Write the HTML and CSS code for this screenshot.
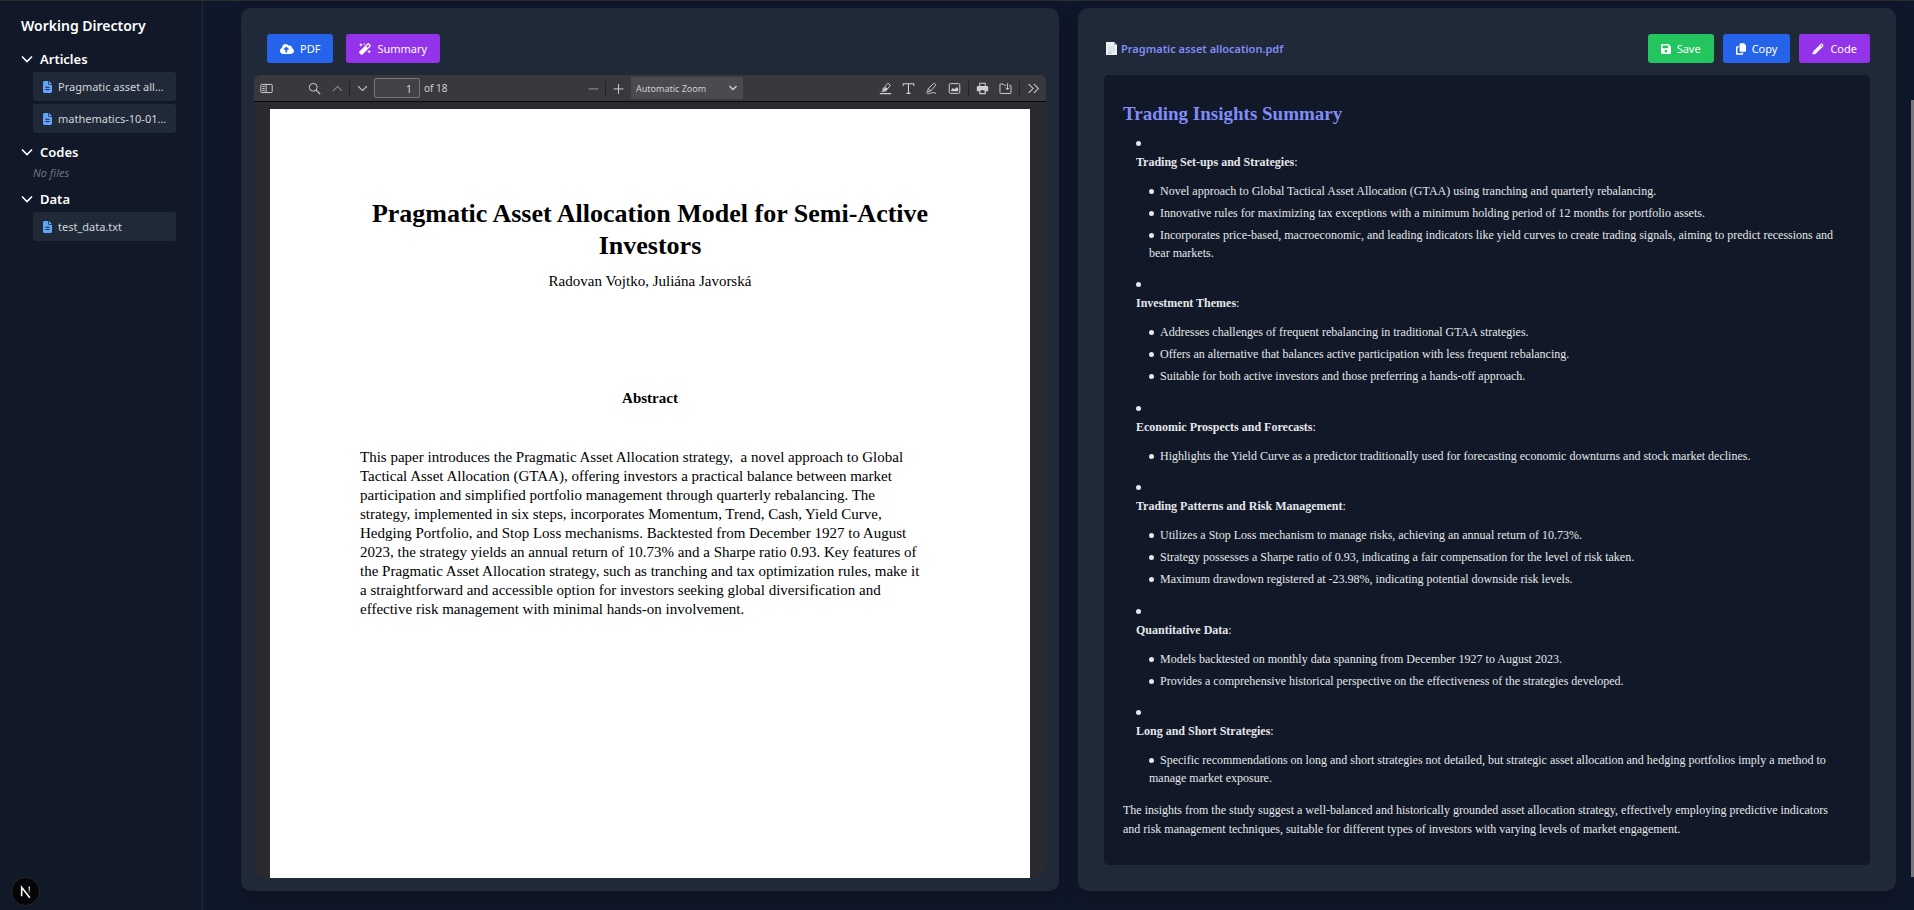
FILE: index.html
```html
<!DOCTYPE html>
<html lang="en">
<head>
<meta charset="utf-8">
<title>Trading Insights</title>
<link rel="stylesheet" href="styles.css">
</head>
<body>
<svg class="defs" aria-hidden="true">
  <symbol id="chev" viewBox="0 0 12 8"><path d="M1 1.5l5 5 5-5" fill="none" stroke="currentColor" stroke-width="1.6"/></symbol>
  <symbol id="file" viewBox="0 0 384 512"><path fill="currentColor" fill-rule="evenodd" d="M64 0C28.700 0 0 28.700 0 64v384c0 35.300 28.700 64 64 64h256c35.300 0 64-28.700 64-64V160H256c-17.700 0-32-14.300-32-32V0H64zm192 0v128h128L256 0zM112 240h160c8.800 0 16 7.200 16 24s-7.200 24-16 24H112c-8.800 0-16-7.200-16-24s7.200-24 16-24zm0 100h160c8.800 0 16 7.200 16 24s-7.200 24-16 24H112c-8.800 0-16-7.200-16-24s7.200-24 16-24z"/></symbol>
</svg>
<div class="app">
  <aside class="sidebar">
    <h1 class="sidebar-title">Working Directory</h1>
    <section class="folder">
      <button class="folder-head"><svg class="chevron"><use href="#chev"/></svg>Articles</button>
      <button class="file"><svg class="file-icon"><use href="#file"/></svg>Pragmatic asset all…</button>
      <button class="file"><svg class="file-icon"><use href="#file"/></svg>mathematics-10-01…</button>
    </section>
    <section class="folder">
      <button class="folder-head"><svg class="chevron"><use href="#chev"/></svg>Codes</button>
      <p class="empty">No files</p>
    </section>
    <section class="folder">
      <button class="folder-head"><svg class="chevron"><use href="#chev"/></svg>Data</button>
      <button class="file"><svg class="file-icon"><use href="#file"/></svg>test_data.txt</button>
    </section>
  </aside>

  <main class="main">
    <section class="panel">
      <div class="actions actions-left">
        <button class="btn blue"><svg class="ico wide" viewBox="0 0 640 512"><path fill="currentColor" d="M537.600 226.600c4.100-10.700 6.400-22.400 6.400-34.600 0-53-43-96-96-96-19.700 0-38.100 6-53.300 16.200C367 64.200 315.300 32 256 32c-88.400 0-160 71.600-160 160 0 2.700.1 5.400.2 8.100C40.200 219.800 0 273.200 0 336c0 79.500 64.500 144 144 144h368c70.700 0 128-57.300 128-128 0-61.900-44-113.600-102.400-125.400zM393.400 288H328v112c0 8.800-7.200 16-16 16h-48c-8.800 0-16-7.200-16-16V288h-65.400c-14.300 0-21.400-17.200-11.300-27.400l105.400-105.400c6.200-6.200 16.400-6.200 22.600 0l105.400 105.400c10.100 10.200 2.900 27.400-11.300 27.400z"/></svg>PDF</button>
        <button class="btn purple"><svg class="ico" viewBox="0 0 512 512"><path fill="currentColor" d="M224 96l16-32 32-16-32-16-16-32-16 32-32 16 32 16 16 32zM80 160l26.660-53.330L160 80l-53.340-26.670L80 0 53.340 53.330 0 80l53.340 26.670L80 160zm352 128l-26.660 53.330L352 368l53.340 26.670L432 448l26.660-53.330L512 368l-53.340-26.670L432 288zm70.620-193.770L417.770 9.380C411.530 3.120 403.340 0 395.150 0c-8.190 0-16.380 3.120-22.630 9.380L9.380 372.520c-12.500 12.500-12.500 32.760 0 45.250l84.850 84.850c6.250 6.250 14.440 9.370 22.620 9.370 8.190 0 16.380-3.120 22.630-9.370l363.140-363.150c12.500-12.480 12.500-32.750 0-45.240zM359.450 203.460l-50.910-50.910 86.600-86.600 50.910 50.910-86.600 86.600z"/></svg>Summary</button>
      </div>
      <div class="viewer">
        <div class="toolbar">
          <div class="tools">
            <button class="tool" aria-label="Toggle sidebar"><svg viewBox="0 0 16 16"><path d="M2 3h12a1 1 0 0 1 1 1v8a1 1 0 0 1-1 1H2a1 1 0 0 1-1-1V4a1 1 0 0 1 1-1zM7.500 3v10M2.800 5.500h3M2.800 8h3M2.800 10.500h3" fill="none" stroke="currentColor" stroke-width="1.200"/></svg></button>
            <button class="tool find" aria-label="Find"><svg viewBox="0 0 16 16"><circle cx="6.500" cy="6.500" r="4.800" fill="none" stroke="currentColor" stroke-width="1.200"/><path d="M10 10l5 5" stroke="currentColor" stroke-width="1.400"/></svg></button>
            <button class="tool dim" aria-label="Previous page"><svg viewBox="0 0 16 16"><path d="M2.500 11L8 5.500 13.500 11" fill="none" stroke="currentColor" stroke-width="1.300"/></svg></button>
            <span class="sep"></span>
            <button class="tool" aria-label="Next page"><svg viewBox="0 0 16 16"><path d="M2.500 5L8 10.500 13.500 5" fill="none" stroke="currentColor" stroke-width="1.300"/></svg></button>
            <input class="page-input" id="page" type="text" value="1" size="3"><label class="page-count" for="page">of 18</label>
          </div>
          <div class="tools tools-mid">
            <button class="tool dim" aria-label="Zoom out"><svg viewBox="0 0 16 16"><path d="M2 8.500h12" stroke="currentColor" stroke-width="1.400"/></svg></button>
            <span class="sep"></span>
            <button class="tool" aria-label="Zoom in"><svg viewBox="0 0 16 16"><path d="M2 8.500h12M8 2.500v12" stroke="currentColor" stroke-width="1.200"/></svg></button>
            <span class="zoom"><select class="zoom-select" aria-label="Zoom"><option>Automatic Zoom</option></select><svg class="zoom-arrow" viewBox="0 0 12 8"><path d="M2.500 2L6 5.500 9.500 2" fill="none" stroke="currentColor" stroke-width="1.400"/></svg></span>
          </div>
          <div class="tools tools-end">
            <button class="tool" aria-label="Highlight"><svg viewBox="0 0 16 16"><path d="M11 1.500l3 2.500-5.500 7H5L4.800 8.500z M4.800 8.500l3.500 2.500M3 11.500h3" fill="none" stroke="currentColor" stroke-width="1.200"/><path d="M8 6l2.500 2L8.500 10.500H5.500V9z" fill="currentColor"/><path d="M1 14.300h14" stroke="currentColor" stroke-width="1.500"/></svg></button>
            <button class="tool" aria-label="Text"><svg viewBox="0 0 16 16"><path d="M1.500 5V2.200h13V5M8 2.500v11.500M5.500 14h5" fill="none" stroke="currentColor" stroke-width="1.300"/></svg></button>
            <button class="tool" aria-label="Draw"><svg viewBox="0 0 16 16"><path d="M3 12l1-4 6.500-6c1.200-.8 3.300 1 2.500 2.300L7 11zM4.500 8l2.500 2.800M1.500 12.500c1 3 4 1.500 6 1s4-1 6 .7" fill="none" stroke="currentColor" stroke-width="1.200"/></svg></button>
            <button class="tool" aria-label="Add image"><svg viewBox="0 0 16 16"><rect x="1.500" y="2" width="13" height="12" rx="1.500" fill="none" stroke="currentColor" stroke-width="1.200"/><path d="M4 11.500V9.500l2-2 2 1.500 3-3 1.500 2v3.500z" fill="currentColor"/></svg></button>
            <span class="sep"></span>
            <button class="tool" aria-label="Print"><svg viewBox="0 0 16 16"><path fill="currentColor" fill-rule="evenodd" d="M4 1h8v4h1.500A1.500 1.500 0 0 1 15 6.500v5h-3V15H4v-3.500H1v-5A1.500 1.500 0 0 1 2.500 5H4zm1.200 1.200V5h5.600V2.200zM5.500 10v3.500h5V10z"/></svg></button>
            <button class="tool" aria-label="Save file"><svg viewBox="0 0 16 16"><path d="M8.500 4H6.500L5 2.500H2a.8.8 0 0 0-.8.8v10c0 .4.3.8.8.8h12c.5 0 .8-.4.800-.8V4.800c0-.5-.3-.8-.8-.8h-1.500M10.500 1.500v7.500M8 7l2.500 2.500L13 7" fill="none" stroke="currentColor" stroke-width="1.200"/></svg></button>
            <span class="sep"></span>
            <button class="tool" aria-label="More tools"><svg viewBox="0 0 16 16"><path d="M2 2.500L7.500 8 2 13.500M8.500 2.500L14 8l-5.500 5.500" fill="none" stroke="currentColor" stroke-width="1.300"/></svg></button>
          </div>
        </div>
        <div class="pages">
          <article class="paper">
            <h2 class="paper-title">Pragmatic Asset Allocation Model for Semi-Active<br>Investors</h2>
            <p class="paper-authors">Radovan Vojtko, Juliána Javorská</p>
            <h3 class="paper-section">Abstract</h3>
            <p class="paper-body">This paper introduces the Pragmatic Asset Allocation strategy, &nbsp;a novel approach to Global<br>Tactical Asset Allocation (GTAA), offering investors a practical balance between market<br>participation and simplified portfolio management through quarterly rebalancing. The<br>strategy, implemented in six steps, incorporates Momentum, Trend, Cash, Yield Curve,<br>Hedging Portfolio, and Stop Loss mechanisms. Backtested from December 1927 to August<br>2023, the strategy yields an annual return of 10.73% and a Sharpe ratio 0.93. Key features of<br>the Pragmatic Asset Allocation strategy, such as tranching and tax optimization rules, make it<br>a straightforward and accessible option for investors seeking global diversification and<br>effective risk management with minimal hands-on involvement.</p>
          </article>
        </div>
      </div>
    </section>

    <section class="panel panel-summary">
      <div class="actions">
        <h2 class="doc-name"><svg class="doc-icon" viewBox="0 0 11 13"><path d="M0 0h8l3 3v10H0z" fill="#eceff1"/><path d="M8 0v3h3z" fill="#7fb4d6"/><path d="M2 5h7M2 7h7M2 9h7" stroke="#cfd8dc" stroke-width="1"/><path d="M2 11h4" stroke="#b0bec5" stroke-width="1"/></svg>Pragmatic asset allocation.pdf</h2>
        <div class="btns">
          <button class="btn green"><svg class="ico narrow" viewBox="0 0 448 512"><path fill="currentColor" fill-rule="evenodd" d="M64 32C28.700 32 0 60.700 0 96v320c0 35.300 28.700 64 64 64h320c35.300 0 64-28.700 64-64V173.300c0-17-6.700-33.300-18.700-45.300L352 50.700C340 38.700 323.700 32 306.700 32H64zm0 96c0-17.700 14.300-32 32-32h192c17.700 0 32 14.300 32 32v64c0 17.700-14.300 32-32 32H96c-17.700 0-32-14.300-32-32v-64zM224 288a64 64 0 1 1 0 128 64 64 0 1 1 0-128z"/></svg>Save</button>
          <button class="btn blue"><svg class="ico narrow" viewBox="0 0 448 512"><path fill="currentColor" d="M208 0h124.100c12.700 0 24.900 5.100 33.900 14.100l67.900 67.900c9 9 14.100 21.200 14.100 33.900V336c0 26.500-21.500 48-48 48H208c-26.500 0-48-21.500-48-48V48c0-26.500 21.500-48 48-48zM48 128h80v64H64v256h192v-32h64v48c0 26.500-21.500 48-48 48H48c-26.500 0-48-21.500-48-48V176c0-26.500 21.500-48 48-48z"/></svg>Copy</button>
          <button class="btn purple"><svg class="ico" viewBox="0 0 12 12"><path fill="currentColor" fill-rule="evenodd" d="M.5 11.500l.6-3L8.600 1c1.300-1.300 3.700 1 2.400 2.400L3.500 10.900zM8.300 2.900l.8.800 1.200-1.200-.8-.8z"/></svg>Code</button>
        </div>
      </div>
      <article class="summary">
        <h2 class="summary-title">Trading Insights Summary</h2>
        <ul class="topics">
          <li><p><strong>Trading Set-ups and Strategies</strong>:</p>
            <ul class="points">
              <li>Novel approach to Global Tactical Asset Allocation (GTAA) using tranching and quarterly rebalancing.</li>
              <li>Innovative rules for maximizing tax exceptions with a minimum holding period of 12 months for portfolio assets.</li>
              <li>Incorporates price-based, macroeconomic, and leading indicators like yield curves to create trading signals, aiming to predict recessions and bear markets.</li>
            </ul></li>
          <li><p><strong>Investment Themes</strong>:</p>
            <ul class="points">
              <li>Addresses challenges of frequent rebalancing in traditional GTAA strategies.</li>
              <li>Offers an alternative that balances active participation with less frequent rebalancing.</li>
              <li>Suitable for both active investors and those preferring a hands-off approach.</li>
            </ul></li>
          <li><p><strong>Economic Prospects and Forecasts</strong>:</p>
            <ul class="points">
              <li>Highlights the Yield Curve as a predictor traditionally used for forecasting economic downturns and stock market declines.</li>
            </ul></li>
          <li><p><strong>Trading Patterns and Risk Management</strong>:</p>
            <ul class="points">
              <li>Utilizes a Stop Loss mechanism to manage risks, achieving an annual return of 10.73%.</li>
              <li>Strategy possesses a Sharpe ratio of 0.93, indicating a fair compensation for the level of risk taken.</li>
              <li>Maximum drawdown registered at -23.98%, indicating potential downside risk levels.</li>
            </ul></li>
          <li><p><strong>Quantitative Data</strong>:</p>
            <ul class="points">
              <li>Models backtested on monthly data spanning from December 1927 to August 2023.</li>
              <li>Provides a comprehensive historical perspective on the effectiveness of the strategies developed.</li>
            </ul></li>
          <li><p><strong>Long and Short Strategies</strong>:</p>
            <ul class="points">
              <li>Specific recommendations on long and short strategies not detailed, but strategic asset allocation and hedging portfolios imply a method to manage market exposure.</li>
            </ul></li>
        </ul>
        <p class="closing">The insights from the study suggest a well-balanced and historically grounded asset allocation strategy, effectively employing predictive indicators and risk management techniques, suitable for different types of investors with varying levels of market engagement.</p>
      </article>
    </section>
  </main>
</div>
<button class="dev-badge" aria-label="Developer tools"><svg viewBox="0 0 28 28"><defs><linearGradient id="fade" x1="0" y1="0" x2="0" y2="1"><stop offset="0" stop-color="#fff"/><stop offset="1" stop-color="#fff" stop-opacity="0"/></linearGradient></defs><path d="M10 19V9.500l8.500 11" fill="none" stroke="#fff" stroke-width="1.600"/><path d="M17.200 9h1.500v8h-1.500z" fill="url(#fade)"/></svg></button>
<div class="scroll-thumb"></div>
</body>
</html>
```
FILE: styles.css
```css
* { box-sizing: border-box; }
body {
  margin: 0;
  background: #0f172a;
  color: #fff;
  font-family: "Noto Sans", "Open Sans", sans-serif;
  font-size: 12px;
}
h1, h2, h3, p, ul { margin: 0; padding: 0; }
button, input, select { font: inherit; color: inherit; margin: 0; border: 0; background: none; }
button { padding: 0; cursor: pointer; }
svg { display: block; flex: none; }
.defs { position: absolute; width: 0; height: 0; }

.app {
  display: flex;
  min-height: 100vh;
  border-top: 1px solid #2b2a2c;
}

/* Sidebar */
.sidebar {
  width: 203px;
  flex: none;
  padding: 14px 26px 0 20px;
  background: #111827;
  border-right: 1px solid #1f2937;
}
.sidebar-title {
  padding-left: 1px;
  font-size: 14px;
  line-height: 22px;
  font-weight: 600;
  white-space: nowrap;
}
.folder { display: flex; flex-direction: column; gap: 3px; padding-left: 13px; }
.sidebar-title + .folder { margin-top: 12px; }
.folder + .folder { margin-top: 9px; }
.folder-head {
  display: flex;
  align-items: center;
  gap: 7px;
  height: 20px;
  margin-left: -12px;
  font-size: 13px;
  font-weight: 600;
}
.chevron { width: 12px; height: 8px; }
.file {
  display: flex;
  align-items: center;
  gap: 6px;
  height: 29px;
  padding: 0 10px;
  border-radius: 3px;
  background: #1f2937;
  color: #d1d5db;
  font-size: 11px;
  white-space: nowrap;
}
.file-icon { width: 9px; height: 12px; color: #60a5fa; }
.empty { color: #6b7280; font-size: 11px; line-height: 15px; font-style: italic; }

/* Panels */
.main {
  flex: 1;
  min-width: 0;
  display: grid;
  grid-template-columns: 1fr 1fr;
  gap: 19px;
  padding: 7px 18px 19px 38px;
}
.panel {
  display: flex;
  flex-direction: column;
  min-width: 0;
  padding: 26px 13px 13px;
  border-radius: 10px;
  background: #1f2937;
  box-shadow: 0 8px 14px rgba(15, 15, 25, 0.5);
}
.panel-summary { padding: 26px; }
.actions {
  display: flex;
  align-items: center;
  justify-content: space-between;
  margin-bottom: 12px;
}
.actions-left { justify-content: flex-start; gap: 13px; padding: 0 13px; }
.btns { display: flex; gap: 9px; }
.btn {
  display: flex;
  align-items: center;
  gap: 6px;
  height: 29px;
  padding: 0 13px;
  border-radius: 3px;
  font-size: 11px;
}
.blue { background: #2563eb; }
.purple { background: #9333ea; }
.green { background: #22c55e; }
.ico { width: 12px; height: 12px; }
.wide { width: 14px; }
.narrow { width: 10px; }
.doc-name {
  display: flex;
  align-items: center;
  gap: 4px;
  padding-left: 2px;
  color: #818cf8;
  font-size: 11px;
  font-weight: 600;
}
.doc-icon { width: 11px; height: 13px; }

/* PDF viewer */
.viewer {
  flex: 1;
  display: flex;
  flex-direction: column;
  border-radius: 6px 6px 10px 10px;
  background: #2a2a2e;
}
.toolbar {
  display: grid;
  grid-template-columns: 1fr auto 1fr;
  align-items: center;
  height: 27px;
  padding-left: 1px;
  border-radius: 6px 6px 0 0;
  border-bottom: 1px solid #0c0c0d;
  background: #38383d;
  color: #d0d0d2;
}
.tools { display: flex; align-items: center; }
.tools-mid { padding-left: 24px; }
.tools-end { justify-content: flex-end; padding-right: 1px; }
.tool { display: grid; place-items: center; width: 23px; height: 22px; padding: 0; }
.tool svg { width: 13px; height: 13px; }
.find { margin-left: 25px; }
.dim { color: #8c8c90; }
.sep { width: 1px; height: 15px; margin-right: 1px; background: #232327; }
.tools-end .sep { margin: 0 2px; }
.page-input {
  width: 46px;
  height: 20px;
  padding: 0 7px;
  border: 1px solid #77777a;
  border-radius: 2px;
  background: #414146;
  font-size: 11px;
  text-align: right;
}
.page-count { margin-left: 4px; font-size: 10px; }
.zoom { position: relative; margin-left: 1px; }
.zoom-select {
  appearance: none;
  display: block;
  width: 112px;
  height: 22px;
  padding: 0 5px;
  background: #4a4a4f;
  font-size: 9px;
}
.zoom-arrow { position: absolute; right: 4px; top: 7px; width: 12px; height: 8px; pointer-events: none; }
.pages { flex: 1; display: flex; padding: 7px 16px 0; }
.paper {
  flex: 1;
  padding: 89px 90px 0;
  background: #fff;
  color: #000;
  font-family: "Liberation Serif", serif;
  font-size: 15px;
  line-height: 19px;
}
.paper-title { font-size: 26px; line-height: 32px; text-align: center; white-space: nowrap; }
.paper-authors { margin-top: 10px; text-align: center; }
.paper-section { margin-top: 98px; font-size: 15px; text-align: center; }
.paper-body { margin-top: 40px; white-space: nowrap; }

/* Summary */
.summary {
  flex: 1;
  padding: 26px 26px 19px 19px;
  border-radius: 5px;
  background: #111827;
  color: #e5e7eb;
  font-family: "Liberation Serif", serif;
  font-size: 12px;
  line-height: 19px;
}
.summary-title { color: #818cf8; font-size: 19px; line-height: 26px; margin-bottom: 7px; }
.topics, .points { padding-left: 13px; list-style: none; }
.topics > li { margin-bottom: 13px; }
.topics > li:nth-child(even) { margin-bottom: 14px; }
.topics li::before {
  content: "";
  display: inline-block;
  width: 5px;
  height: 5px;
  margin: 0 6px 1px 0;
  border-radius: 50%;
  background: #e5e7eb;
}
.points { margin-top: 10px; line-height: 18px; }
.points li { margin-bottom: 4px; }
.closing { margin-top: 13px; }

/* Overlays */
.dev-badge {
  position: fixed;
  left: 11px;
  bottom: 4px;
  width: 29px;
  height: 29px;
  border: 1px solid #2b2b2b;
  border-radius: 50%;
  background: #050508;
}
.scroll-thumb {
  position: fixed;
  top: 11vh;
  right: 0;
  width: 3px;
  height: 777px;
  background: #77777a;
}
```
